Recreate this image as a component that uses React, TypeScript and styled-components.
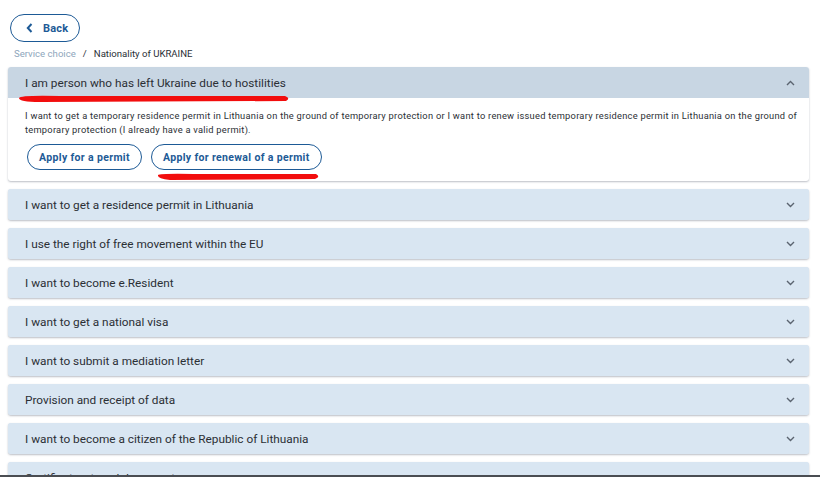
import React from 'react';
import styled, { createGlobalStyle } from 'styled-components';

const GlobalStyle = createGlobalStyle`
  html, body {
    margin: 0;
    padding: 0;
    background: #ffffff;
    font-family: Roboto, "Liberation Sans", Arial, sans-serif;
    overflow: hidden;
  }
`;

const Page = styled.div`
  position: relative;
  height: 477px;
  overflow: hidden;
  padding: 14px 11px 0 8px;
  box-sizing: border-box;
`;

const BackButton = styled.button`
  display: flex;
  align-items: center;
  gap: 10px;
  margin-left: 2px;
  height: 28px;
  padding: 0 11px 0 15px;
  border: 1.5px solid #1d5a96;
  border-radius: 14px;
  background: #fff;
  color: #1d5a96;
  font-family: inherit;
  font-size: 11px;
  font-weight: 700;
  letter-spacing: 0.2px;
`;

const Crumbs = styled.div`
  display: flex;
  gap: 7px;
  margin: 5px 0 0 6px;
  font-size: 9.6px;
  line-height: 14px;
  color: #2a2f36;
`;

const CrumbLink = styled.span`
  color: #8ea6bc;
`;

const List = styled.div`
  display: flex;
  flex-direction: column;
  gap: 8px;
  margin-top: 6px;
`;

const Panel = styled.div<{ $open?: boolean }>`
  border-radius: 3px;
  background: ${p => (p.$open ? '#ffffff' : '#d9e6f2')};
  box-shadow: 0 1px 2px rgba(60, 70, 90, 0.35);
  overflow: hidden;
`;

const Header = styled.div<{ $open?: boolean }>`
  display: flex;
  align-items: center;
  justify-content: space-between;
  height: 31px;
  padding: 0 14px 0 17px;
  background: ${p => (p.$open ? '#c8d6e3' : '#d9e6f2')};
  color: #2b2f35;
  font-size: 11.8px;
`;

const Body = styled.div`
  padding: 11px 12px 11px 17px;
`;

const Text = styled.p`
  margin: 0;
  font-size: 9.3px;
  line-height: 14px;
  letter-spacing: 0.25px;
  text-align: justify;
  color: #2b2f35;
`;

const Actions = styled.div`
  display: flex;
  gap: 9px;
  margin: 7px 0 0 2px;
`;

const Pill = styled.button`
  height: 26px;
  padding: 0 11px;
  border: 1.5px solid #1d5a96;
  border-radius: 13px;
  background: #fff;
  color: #1d5a96;
  font-family: inherit;
  font-size: 10.5px;
  font-weight: 700;
  letter-spacing: 0.35px;
`;

const Scribbles = styled.svg`
  position: absolute;
  left: 0;
  top: 0;
  pointer-events: none;
`;

const BottomEdge = styled.div`
  position: absolute;
  left: 0;
  right: 0;
  bottom: 0;
  height: 2px;
  background: #4a4d52;
`;

const Chevron = ({ up }: { up?: boolean }) => (
  <svg width="9" height="6" viewBox="0 0 9 6">
    <path
      d={up ? 'M1 5 L4.5 1.5 L8 5' : 'M1 1 L4.5 4.5 L8 1'}
      fill="none"
      stroke="#5b6470"
      strokeWidth="1.4"
    />
  </svg>
);

const sections = [
  'I want to get a residence permit in Lithuania',
  'I use the right of free movement within the EU',
  'I want to become e.Resident',
  'I want to get a national visa',
  'I want to submit a mediation letter',
  'Provision and receipt of data',
  'I want to become a citizen of the Republic of Lithuania',
  'Certificates, travel documents',
];

export default function App() {
  return (
    <>
      <GlobalStyle />
      <Page>
        <BackButton>
          <svg width="7" height="10" viewBox="0 0 7 10">
            <path d="M5.5 1 L1.8 5 L5.5 9" fill="none" stroke="#1d5a96" strokeWidth="2" />
          </svg>
          Back
        </BackButton>
        <Crumbs>
          <CrumbLink>Service choice</CrumbLink>
          <span>/</span>
          <span>Nationality of UKRAINE</span>
        </Crumbs>
        <List>
          <Panel $open>
            <Header $open>
              <span>I am person who has left Ukraine due to hostilities</span>
              <Chevron up />
            </Header>
            <Body>
              <Text>
                I want to get a temporary residence permit in Lithuania on the ground of temporary protection or I want to renew issued temporary residence permit in Lithuania on the ground of temporary protection (I already have a valid permit).
              </Text>
              <Actions>
                <Pill>Apply for a permit</Pill>
                <Pill>Apply for renewal of a permit</Pill>
              </Actions>
            </Body>
          </Panel>
          {sections.map(s => (
            <Panel key={s}>
              <Header>
                <span>{s}</span>
                <Chevron />
              </Header>
            </Panel>
          ))}
        </List>
        <Scribbles width="820" height="477">
          <path
            d="M19 98 Q20 95 60 96 L285 96 Q291 98 286 101 L40 102 Q19 102 19 98 Z"
            fill="#f20d0d"
          />
          <path
            d="M158 175 Q160 173 200 174 L316 174 Q321 177 315 179 L170 180 Q157 179 158 175 Z"
            fill="#f20d0d"
          />
        </Scribbles>
        <BottomEdge />
      </Page>
    </>
  );
}
